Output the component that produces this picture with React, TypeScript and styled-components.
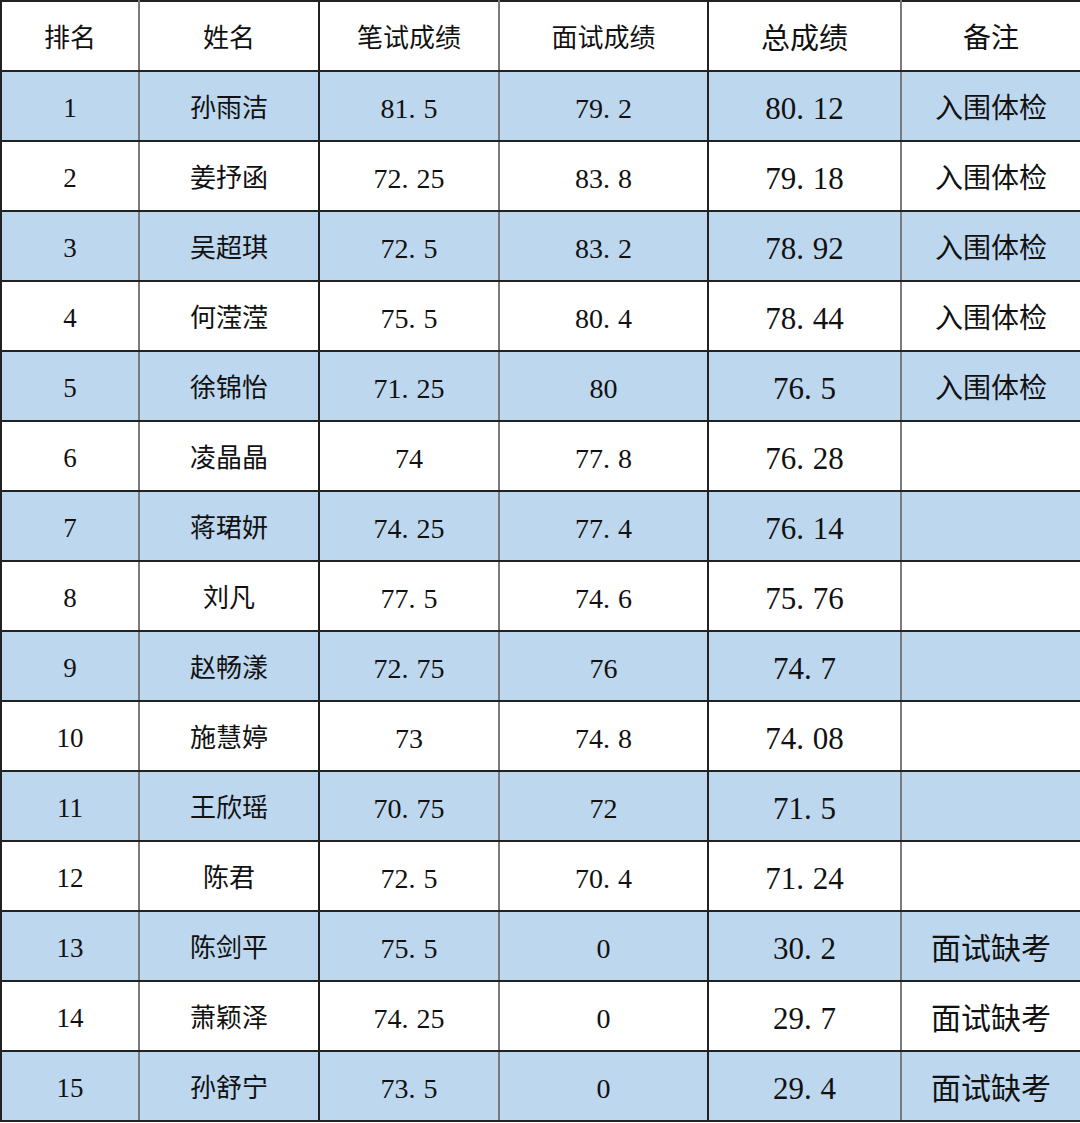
import React from "react";
import styled, { createGlobalStyle } from "styled-components";

const Global = createGlobalStyle`
  html, body { margin: 0; padding: 0; background: #ffffff; }
  body { font-family: "Liberation Serif", "Noto Sans CJK SC", serif; color: #111111; }
`;

type Row = { rank: number; name: string; written: string; interview: string; total: string; note: string };

const rows: Row[] = [
  { rank: 1, name: "孙雨洁", written: "81.5", interview: "79.2", total: "80.12", note: "入围体检" },
  { rank: 2, name: "姜抒函", written: "72.25", interview: "83.8", total: "79.18", note: "入围体检" },
  { rank: 3, name: "吴超琪", written: "72.5", interview: "83.2", total: "78.92", note: "入围体检" },
  { rank: 4, name: "何滢滢", written: "75.5", interview: "80.4", total: "78.44", note: "入围体检" },
  { rank: 5, name: "徐锦怡", written: "71.25", interview: "80", total: "76.5", note: "入围体检" },
  { rank: 6, name: "凌晶晶", written: "74", interview: "77.8", total: "76.28", note: "" },
  { rank: 7, name: "蒋珺妍", written: "74.25", interview: "77.4", total: "76.14", note: "" },
  { rank: 8, name: "刘凡", written: "77.5", interview: "74.6", total: "75.76", note: "" },
  { rank: 9, name: "赵畅漾", written: "72.75", interview: "76", total: "74.7", note: "" },
  { rank: 10, name: "施慧婷", written: "73", interview: "74.8", total: "74.08", note: "" },
  { rank: 11, name: "王欣瑶", written: "70.75", interview: "72", total: "71.5", note: "" },
  { rank: 12, name: "陈君", written: "72.5", interview: "70.4", total: "71.24", note: "" },
  { rank: 13, name: "陈剑平", written: "75.5", interview: "0", total: "30.2", note: "面试缺考" },
  { rank: 14, name: "萧颖泽", written: "74.25", interview: "0", total: "29.7", note: "面试缺考" },
  { rank: 15, name: "孙舒宁", written: "73.5", interview: "0", total: "29.4", note: "面试缺考" },
];

const widths = [138, 180, 180, 209, 193, 180];
const lineColors = ["#7a7a7a", "#222222", "#7a7a7a", "#222222", "#7a7a7a", "#222222"];

const Table = styled.table`
  border-collapse: collapse;
  table-layout: fixed;
  width: 1080px;
  border-top: 2px solid #222222;
  border-left: 2px solid #222222;
`;

const TR = styled.tr<{ $shaded: boolean }>`
  height: 70px;
  background: ${(p) => (p.$shaded ? "#bdd7ee" : "#ffffff")};
`;

const Cell = styled.td<{ $line: string; $size: number }>`
  border-bottom: 2px solid #222222;
  border-right: 2px solid ${(p) => p.$line};
  text-align: center;
  vertical-align: middle;
  padding: 5px 0 0 0;
  font-size: ${(p) => p.$size}px;
  line-height: 1;
  white-space: nowrap;
`;

const Head = styled(Cell).attrs({ as: "th" })`
  font-weight: 400;
  padding-top: 6px;
`;

const Dot = styled.span`
  margin-right: 0.28em;
`;

const Num: React.FC<{ value: string }> = ({ value }) => {
  const [a, b] = value.split(".");
  if (b === undefined) return <>{a}</>;
  return (
    <>
      {a}
      <Dot>.</Dot>
      {b}
    </>
  );
};

const headers = ["排名", "姓名", "笔试成绩", "面试成绩", "总成绩", "备注"];
const headSizes = [26, 26, 26, 26, 29, 28];

export default function App() {
  return (
    <>
      <Global />
      <Table>
        <colgroup>
          {widths.map((w, i) => (
            <col key={i} style={{ width: w }} />
          ))}
        </colgroup>
        <thead>
          <TR $shaded={false}>
            {headers.map((h, i) => (
              <Head key={h} $line={lineColors[i]} $size={headSizes[i]}>
                {h}
              </Head>
            ))}
          </TR>
        </thead>
        <tbody>
          {rows.map((r) => (
            <TR key={r.rank} $shaded={r.rank % 2 === 1}>
              <Cell $line={lineColors[0]} $size={27}>{r.rank}</Cell>
              <Cell $line={lineColors[1]} $size={26}>{r.name}</Cell>
              <Cell $line={lineColors[2]} $size={28}><Num value={r.written} /></Cell>
              <Cell $line={lineColors[3]} $size={28}><Num value={r.interview} /></Cell>
              <Cell $line={lineColors[4]} $size={31}><Num value={r.total} /></Cell>
              <Cell $line={lineColors[5]} $size={r.note === "面试缺考" ? 30 : 28}>{r.note}</Cell>
            </TR>
          ))}
        </tbody>
      </Table>
    </>
  );
}
